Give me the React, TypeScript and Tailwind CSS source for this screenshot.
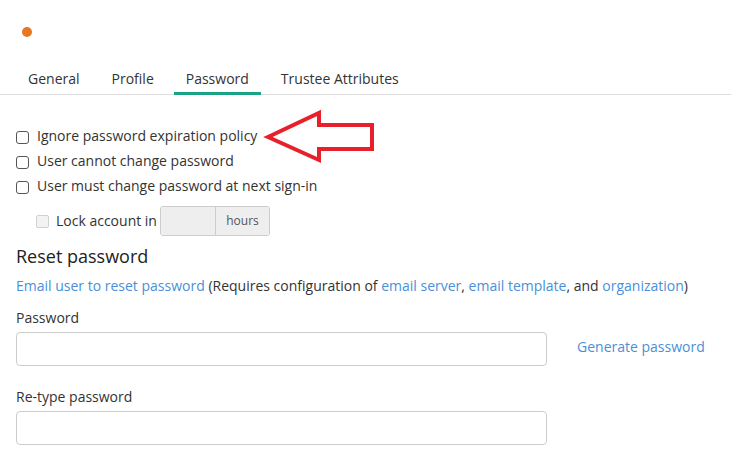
import React from "react";

function Box({ disabled = false }: { disabled?: boolean }) {
  return (
    <span
      className={
        disabled
          ? "inline-block h-[13px] w-[13px] shrink-0 rounded-[2px] border border-[#d0d0d0] bg-[#f3f3f3]"
          : "inline-block h-[13px] w-[13px] shrink-0 rounded-[3px] border border-[#555] bg-white"
      }
    />
  );
}

export default function App() {
  const tabs = ["General", "Profile", "Password", "Trustee Attributes"];
  return (
    <div
      className="relative h-[472px] w-[731px] overflow-hidden bg-white text-[14px] leading-[20px] text-[#333]"
      style={{ fontFamily: '"Open Sans", sans-serif' }}
    >
      <div className="ml-[22px] mt-[27px] h-[10px] w-[10px] rounded-full bg-[#e87722]" />

      <div className="mt-[25px] flex gap-[8px] border-b border-[#ddd] pl-[16px]">
        {tabs.map((t) => (
          <div
            key={t}
            className={
              t === "Password"
                ? "-mb-px border-b-[3px] border-[#1aa386] px-[12px] pb-[3px] pt-[7px] text-[#333]"
                : "-mb-px border-b-[3px] border-transparent px-[12px] pb-[3px] pt-[7px] text-[#333]"
            }
          >
            {t}
          </div>
        ))}
      </div>

      <div className="px-[16px]">
        <div className="mt-[31px] flex flex-col gap-[5px]">
          <label className="flex items-center gap-[8px]">
            <span className="mt-[3px] flex"><Box /></span>
            <span>Ignore password expiration policy</span>
          </label>
          <label className="flex items-center gap-[8px]">
            <span className="mt-[3px] flex"><Box /></span>
            <span>User cannot change password</span>
          </label>
          <label className="flex items-center gap-[8px]">
            <span className="mt-[3px] flex"><Box /></span>
            <span>User must change password at next sign-in</span>
          </label>
        </div>

        <div className="mt-[10px] flex items-center pl-[20px]">
          <span className="mt-[1px] flex"><Box disabled /></span>
          <span className="ml-[7px] text-[#333]">Lock account in</span>
          <div className="ml-[3px] flex h-[30px] overflow-hidden rounded-[3px] border border-[#ccc]">
            <div className="w-[55px] border-r border-[#ccc] bg-[#eee]" />
            <div className="flex w-[53px] items-center justify-center bg-[#eee] text-[12px] text-[#555]">
              hours
            </div>
          </div>
        </div>

        <div className="mt-[7px] text-[18px] leading-[26px] text-[#222]">Reset password</div>

        <div className="mt-[7px] whitespace-nowrap">
          <span className="text-[#4a8fd8]">Email user to reset password</span>{" "}
          (Requires configuration of{" "}
          <span className="text-[#4a8fd8]">email server</span>,{" "}
          <span className="text-[#4a8fd8]">email template</span>, and{" "}
          <span className="text-[#4a8fd8]">organization</span>)
        </div>

        <div className="mt-[12px]">Password</div>
        <div className="mt-[4px] flex items-center">
          <div className="h-[34px] w-[531px] rounded-[4px] border border-[#ccc] bg-white" />
          <span className="mb-[4px] ml-[30px] text-[#4a8fd8]">Generate password</span>
        </div>

        <div className="mt-[21px]">Re-type password</div>
        <div className="mt-[4px] h-[34px] w-[531px] rounded-[4px] border border-[#ccc] bg-white" />
      </div>

      <svg
        className="absolute left-[260px] top-[106px]"
        width="120"
        height="62"
        viewBox="260 106 120 62"
      >
        <path
          d="M268 137 L319 113 L319 125 L372 125 L372 149 L319 149 L319 160 Z"
          fill="none"
          stroke="#e8202a"
          strokeWidth="4"
          strokeLinejoin="miter"
        />
      </svg>
    </div>
  );
}
